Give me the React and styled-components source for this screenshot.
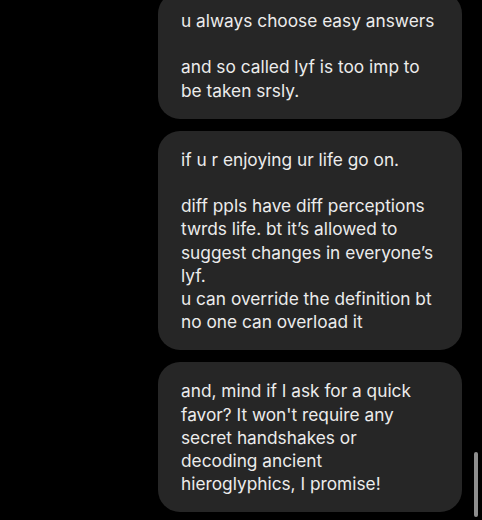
import React from "react";
import styled, { createGlobalStyle } from "styled-components";

const GlobalStyle = createGlobalStyle`
  html, body {
    margin: 0;
    padding: 0;
    background: #000;
  }
  body {
    font-family: Inter, "Liberation Sans", Arial, sans-serif;
    -webkit-font-smoothing: antialiased;
  }
`;

const Screen = styled.div`
  position: relative;
  width: 482px;
  height: 520px;
  overflow: hidden;
  background: #000;
`;

const Thread = styled.div`
  display: flex;
  flex-direction: column;
  align-items: flex-end;
  gap: 12px;
  padding-right: 20px;
  margin-top: -8px;
`;

const Bubble = styled.div`
  box-sizing: border-box;
  width: 304px;
  padding: 17px 16px 17px 23px;
  border-radius: 22px;
  background: #262626;
  color: #ececec;
  font-size: 17.3px;
  line-height: 23.2px;
  white-space: pre-line;
`;

const ScrollThumb = styled.div`
  position: absolute;
  right: 4px;
  top: 452px;
  width: 4px;
  height: 65px;
  border-radius: 2px;
  background: #8e8e8e;
`;

const messages = [
  "u always choose easy answers\n\nand so called lyf is too imp to\nbe taken srsly.",
  "if u r enjoying ur life go on.\n\ndiff ppls have diff perceptions\ntwrds life. bt it\u2019s allowed to\nsuggest changes in everyone\u2019s\nlyf.\nu can override the definition bt\nno one can overload it",
  "and, mind if I ask for a quick\nfavor? It won't require any\nsecret handshakes or\ndecoding ancient\nhieroglyphics, I promise!",
];

export default function App() {
  return (
    <>
      <GlobalStyle />
      <Screen>
        <Thread>
          {messages.map((text, i) => (
            <Bubble key={i}>{text}</Bubble>
          ))}
        </Thread>
        <ScrollThumb />
      </Screen>
    </>
  );
}
